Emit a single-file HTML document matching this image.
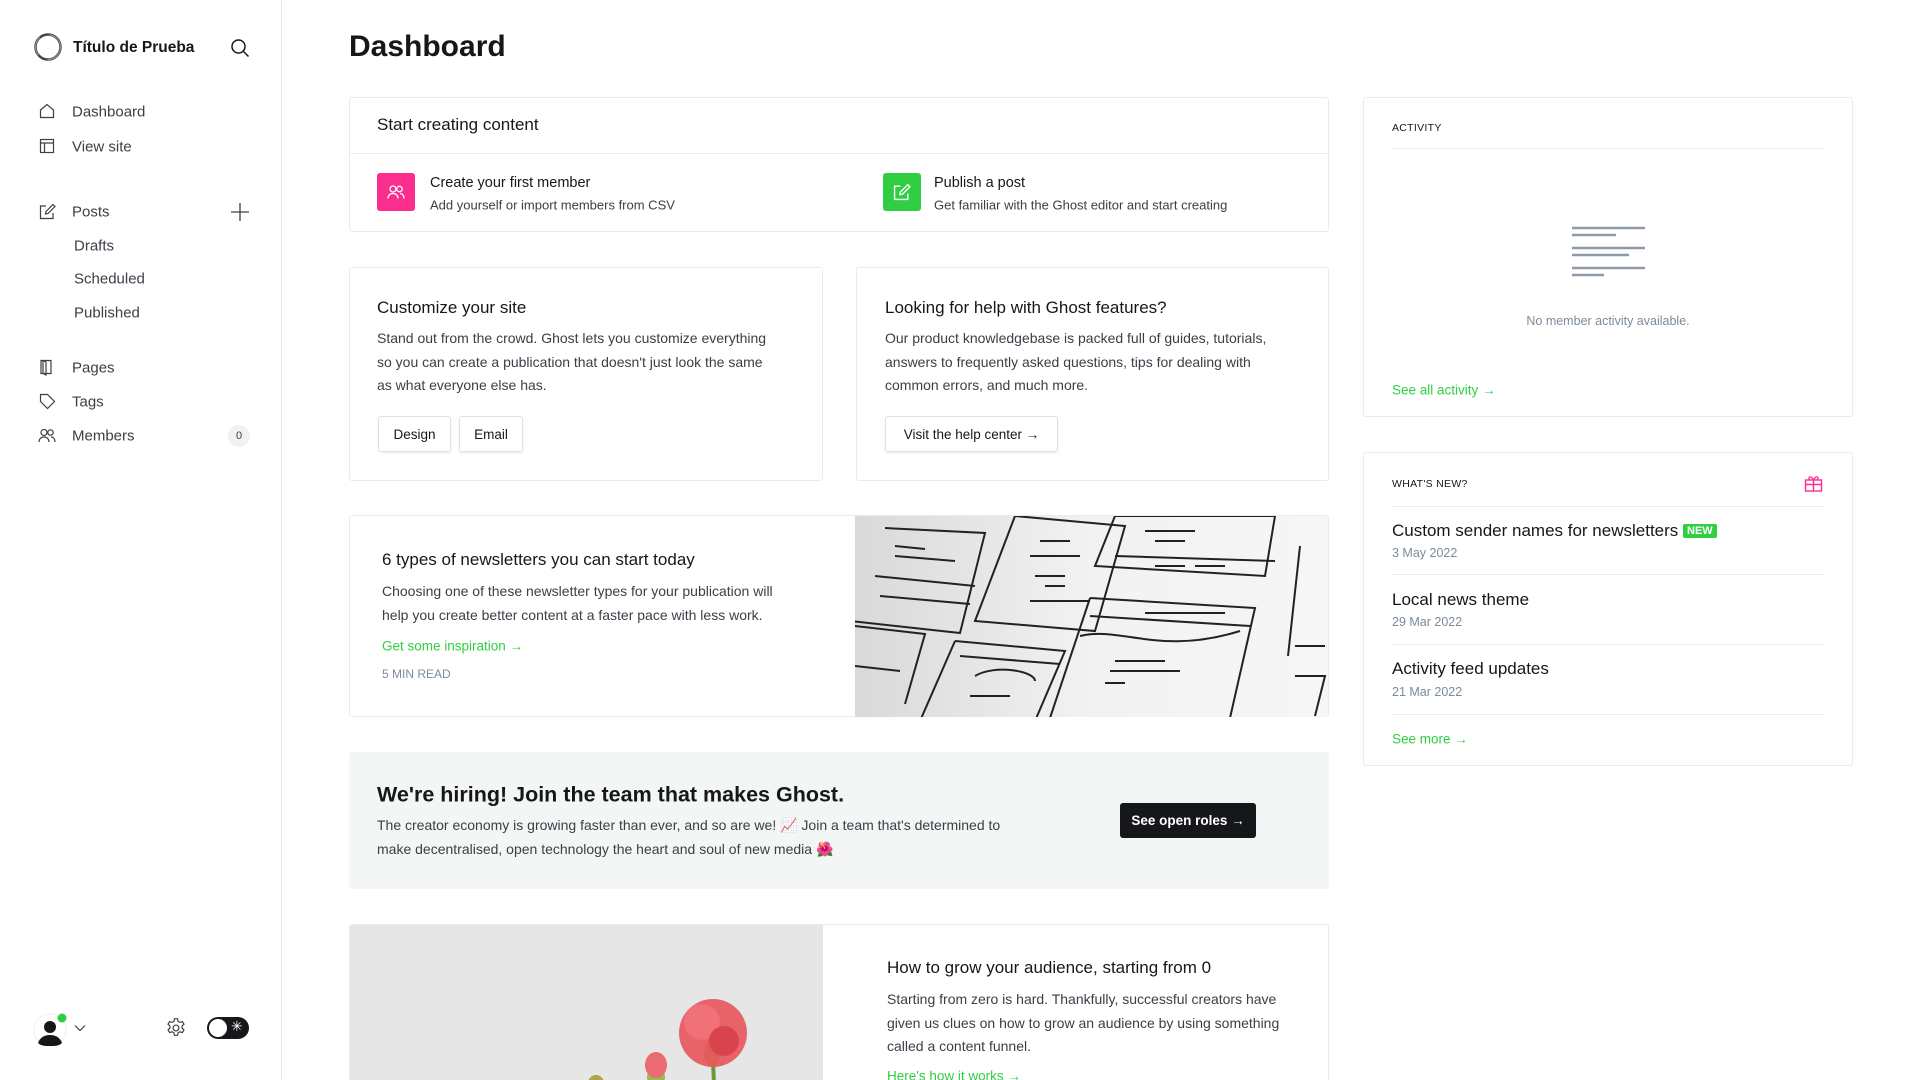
<!DOCTYPE html>
<html><head><meta charset="utf-8"><style>
*{margin:0;padding:0;box-sizing:border-box}
html{width:1920px;height:1080px;overflow:hidden}
body{width:1920px;height:1080px;overflow:hidden;background:#fff;font-family:"Liberation Sans",sans-serif;color:#15171a;position:relative}
.a{position:absolute;white-space:nowrap}
.vc{transform:translateY(-50%)}
.side{position:absolute;left:0;top:0;width:282px;height:1080px;border-right:1px solid #e6e8ea}
.nav{font-size:15px;color:#394047}
.card{position:absolute;border:1px solid #e9ebed;border-radius:3px;background:#fff}
.t{font-size:17px;color:#15171a}
.p{font-size:14px;color:#394047;line-height:23.5px}
.btn{position:absolute;border:1px solid #dfe1e3;border-radius:3px;box-shadow:0 1px 2px rgba(0,0,0,.08);font-size:13.5px;display:flex;align-items:center;justify-content:center;color:#15171a}
.g{color:#30cf43;font-size:13.5px}
.lab{font-size:10.5px;letter-spacing:.3px;color:#15171a}
.hr{position:absolute;height:1px;background:#ebeef0}
.wt{font-size:17px;color:#15171a}
.wd{font-size:12.5px;color:#7c8b9a}
</style></head><body>
<div class="side"></div>
<svg class="a" style="left:33px;top:32px" width="30" height="30" viewBox="0 0 30 30"><circle cx="15" cy="15" r="12.5" fill="none" stroke="#444" stroke-width="2.5"/><circle cx="15" cy="15" r="12.5" fill="none" stroke="#999" stroke-width="1" stroke-dasharray="20 10"/></svg>
<div class="a vc" style="left:73px;top:48px;font-size:15.5px;font-weight:bold">Título de Prueba</div>
<svg class="a" style="left:230px;top:38px" width="20" height="20" viewBox="0 0 20 20" fill="none" stroke="#15171a" stroke-width="1.5"><circle cx="8.5" cy="8.5" r="6.5"/><path d="M13.5 13.5l5 5"/></svg>
<svg class="a" style="left:39px;top:103px" width="16" height="16" viewBox="0 0 16 16" fill="none" stroke="#394047" stroke-width="1.2"><path d="M1.5 7L8 1.5 14.5 7v7.5h-13z"/></svg>
<div class="a nav vc" style="left:72px;top:112px">Dashboard</div>
<svg class="a" style="left:39px;top:138px" width="16" height="16" viewBox="0 0 16 16" fill="none" stroke="#394047" stroke-width="1.2"><rect x="1.5" y="1.5" width="13" height="13"/><path d="M1.5 5h13M5.5 5v9.5"/></svg>
<div class="a nav vc" style="left:72px;top:147px">View site</div>
<svg class="a" style="left:39px;top:203px" width="17" height="17" viewBox="0 0 17 17" fill="none" stroke="#394047" stroke-width="1.2"><path d="M7 3H1.5v12.5H14V10"/><path d="M14 1.5l2 2L9 10.5 6.5 11l.5-2.5z"/></svg>
<div class="a nav vc" style="left:72px;top:212px">Posts</div>
<svg class="a" style="left:230px;top:202px" width="20" height="20" viewBox="0 0 20 20" stroke="#394047" stroke-width="1.3"><path d="M10 1v18M1 10h18"/></svg>
<div class="a nav vc" style="left:74px;top:246px">Drafts</div>
<div class="a nav vc" style="left:74px;top:279px">Scheduled</div>
<div class="a nav vc" style="left:74px;top:313px">Published</div>
<svg class="a" style="left:39px;top:359px" width="16" height="17" viewBox="0 0 16 17" fill="none" stroke="#394047" stroke-width="1.2"><path d="M2 1.5h10v13H2zM4 1.5v13l3 1.5V3z"/></svg>
<div class="a nav vc" style="left:72px;top:368px">Pages</div>
<svg class="a" style="left:39px;top:393px" width="17" height="17" viewBox="0 0 17 17" fill="none" stroke="#394047" stroke-width="1.2"><path d="M1.5 1.5h7l7 7-7 7-7-7z"/></svg>
<div class="a nav vc" style="left:72px;top:402px">Tags</div>
<svg class="a" style="left:38px;top:428px" width="18" height="15" viewBox="0 0 18 15" fill="none" stroke="#394047" stroke-width="1.2"><circle cx="6" cy="4.5" r="3"/><path d="M1 14c0-3 2-5 5-5s5 2 5 5"/><circle cx="12.5" cy="4.5" r="2.7"/><path d="M13 9c2.5 0 4 2 4 5"/></svg>
<div class="a nav vc" style="left:72px;top:436px">Members</div>
<div class="a" style="left:228px;top:425px;width:22px;height:22px;border-radius:11px;background:#eff1f2;font-size:11px;color:#394047;display:flex;align-items:center;justify-content:center">0</div>
<svg class="a" style="left:33px;top:1013px" width="34" height="34" viewBox="0 0 34 34"><circle cx="17" cy="17" r="16" fill="#fff" stroke="#eee"/><circle cx="17" cy="14" r="6" fill="#15171a"/><path d="M5 30c2-6 7-8 12-8s10 2 12 8c-3 3-7 3-12 3s-9 0-12-3z" fill="#15171a"/><circle cx="29" cy="5" r="4.5" fill="#30cf43"/></svg>
<svg class="a" style="left:74px;top:1024px" width="12" height="8" viewBox="0 0 12 8" fill="none" stroke="#394047" stroke-width="1.2"><path d="M1 1.5l5 5 5-5"/></svg>
<svg class="a" style="left:165px;top:1017px" width="22" height="22" viewBox="0 0 24 24" fill="none" stroke="#394047" stroke-width="1.3"><circle cx="12" cy="12" r="3.2"/><path d="M10.3 2h3.4l.6 2.8 2 1.1 2.7-.9 1.7 2.9-2.1 1.9v2.4l2.1 1.9-1.7 2.9-2.7-.9-2 1.1-.6 2.8h-3.4l-.6-2.8-2-1.1-2.7.9-1.7-2.9 2.1-1.9V9.8L3.3 7.9 5 5l2.7.9 2-1.1z"/></svg>
<div class="a" style="left:207px;top:1017px;width:42px;height:22px;border-radius:11px;background:#15171a"></div>
<div class="a" style="left:209px;top:1019px;width:18px;height:18px;border-radius:9px;background:#fff"></div>
<div class="a" style="left:231px;top:1018px;font-size:14px;color:#fff">✳</div>

<div class="a vc" style="left:349px;top:47px;font-size:30px;font-weight:bold">Dashboard</div>

<div class="card" style="left:349px;top:97px;width:980px;height:135px"></div>
<div class="hr" style="left:350px;top:153px;width:978px"></div>
<div class="a t vc" style="left:377px;top:125px">Start creating content</div>
<div class="a" style="left:377px;top:173px;width:38px;height:38px;border-radius:3px;background:#fb2d8d"></div>
<svg class="a" style="left:387px;top:184px" width="18" height="16" viewBox="0 0 18 15" fill="none" stroke="#fff" stroke-width="1.3"><circle cx="6" cy="4.5" r="3"/><path d="M1 14c0-3 2-5 5-5s5 2 5 5"/><circle cx="12.5" cy="4.5" r="2.7"/><path d="M13 9c2.5 0 4 2 4 5"/></svg>
<div class="a vc" style="left:430px;top:183px;font-size:14.5px">Create your first member</div>
<div class="a vc" style="left:430px;top:205px;font-size:13px;color:#394047">Add yourself or import members from CSV</div>
<div class="a" style="left:883px;top:173px;width:38px;height:38px;border-radius:3px;background:#30cf43"></div>
<svg class="a" style="left:893px;top:183px" width="18" height="18" viewBox="0 0 17 17" fill="none" stroke="#fff" stroke-width="1.3"><path d="M7 3H1.5v12.5H14V10"/><path d="M14 1.5l2 2L9 10.5 6.5 11l.5-2.5z"/></svg>
<div class="a vc" style="left:934px;top:183px;font-size:14.5px">Publish a post</div>
<div class="a vc" style="left:934px;top:205px;font-size:13px;color:#394047">Get familiar with the Ghost editor and start creating</div>

<div class="card" style="left:349px;top:267px;width:474px;height:214px"></div>
<div class="a t vc" style="left:377px;top:308px">Customize your site</div>
<div class="a p" style="left:377px;top:327px">Stand out from the crowd. Ghost lets you customize everything<br>so you can create a publication that doesn't just look the same<br>as what everyone else has.</div>
<div class="btn" style="left:378px;top:416px;width:73px;height:36px">Design</div>
<div class="btn" style="left:459px;top:416px;width:64px;height:36px">Email</div>
<div class="card" style="left:856px;top:267px;width:473px;height:214px"></div>
<div class="a t vc" style="left:885px;top:308px">Looking for help with Ghost features?</div>
<div class="a p" style="left:885px;top:327px">Our product knowledgebase is packed full of guides, tutorials,<br>answers to frequently asked questions, tips for dealing with<br>common errors, and much more.</div>
<div class="btn" style="left:885px;top:416px;width:173px;height:36px">Visit the help center →</div>

<div class="card" style="left:349px;top:515px;width:980px;height:202px;overflow:hidden"></div>
<div class="a t vc" style="left:382px;top:560px">6 types of newsletters you can start today</div>
<div class="a p" style="left:382px;top:580px">Choosing one of these newsletter types for your publication will<br>help you create better content at a faster pace with less work.</div>
<div class="a g vc" style="left:382px;top:646px">Get some inspiration →</div>
<div class="a vc" style="left:382px;top:674px;font-size:12px;color:#7c8b9a">5 MIN READ</div>
<svg class="a" style="left:855px;top:516px" width="473" height="201" viewBox="0 0 473 201">
<defs><linearGradient id="sk" x1="0" x2="1" y1="0" y2="0"><stop offset="0" stop-color="#d9d9d9"/><stop offset=".5" stop-color="#f2f2f2"/><stop offset="1" stop-color="#f6f6f6"/></linearGradient></defs>
<rect width="473" height="201" fill="url(#sk)"/>
<g fill="none" stroke="#222" stroke-width="2">
<path d="M30 12l100 5-25 100-110-12"/><path d="M20 60l100 10M25 80l90 8M40 30l30 3M40 40l60 5"/>
<path d="M160 0l110 10-30 105-120-10z"/><path d="M175 40h50M180 60h30M175 85h60M185 25h30M190 70h20"/>
<path d="M260 0h160l-10 60-170-10z"/><path d="M260 40l160 5M300 50h30M340 50h30M290 15h50M300 25h30"/>
<path d="M235 82l165 10-25 110M235 82l-40 120"/><path d="M235 100l160 10M225 120c40-10 80 20 160-5"/><path d="M260 145h50M255 155h70M250 167h20M290 97h80"/>
<path d="M100 125l110 10-30 70M100 125l-35 80"/><path d="M105 140l100 8M120 160c20-12 60-5 60 5M115 180h40"/>
<path d="M445 30l-12 110M440 130h30M440 160h30l-10 40"/>
<path d="M0 110l70 8-20 70M0 150l45 5"/>
</g></svg>

<div class="a" style="left:349px;top:752px;width:980px;height:137px;background:#f4f5f5;border-radius:3px"></div>
<div class="a vc" style="left:377px;top:795px;font-size:21.5px;font-weight:bold">We're hiring! Join the team that makes Ghost.</div>
<div class="a p" style="left:377px;top:814px">The creator economy is growing faster than ever, and so are we! 📈 Join a team that's determined to<br>make decentralised, open technology the heart and soul of new media 🌺</div>
<div class="a" style="left:1120px;top:803px;width:136px;height:35px;background:#15171a;border-radius:3px;color:#fff;font-size:13.5px;font-weight:bold;display:flex;align-items:center;justify-content:center">See open roles →</div>

<div class="card" style="left:349px;top:924px;width:980px;height:156px;border-bottom:none;border-radius:3px 3px 0 0"></div>
<svg class="a" style="left:350px;top:925px" width="473" height="155" viewBox="0 0 473 155">
<rect width="473" height="155" fill="#e6e6e6"/>
<path d="M362 110l2 50" stroke="#6a9a3a" stroke-width="4"/><path d="M306 138l2 22" stroke="#6a9a3a" stroke-width="4"/>
<ellipse cx="362" cy="128" rx="8" ry="14" fill="#9bbb4c"/>
<circle cx="363" cy="108" r="34" fill="#e8535b" opacity=".9"/><circle cx="352" cy="97" r="18" fill="#f07177"/><circle cx="374" cy="116" r="15" fill="#d9444c"/>
<ellipse cx="306" cy="152" rx="9" ry="10" fill="#9bbb4c"/><ellipse cx="306" cy="140" rx="11" ry="13" fill="#ea6b72"/>
<ellipse cx="246" cy="158" rx="8" ry="8" fill="#b5a04c"/>
</svg>
<div class="a t vc" style="left:887px;top:968px">How to grow your audience, starting from 0</div>
<div class="a p" style="left:887px;top:988px">Starting from zero is hard. Thankfully, successful creators have<br>given us clues on how to grow an audience by using something<br>called a content funnel.</div>
<div class="a g vc" style="left:887px;top:1076px">Here's how it works →</div>

<div class="card" style="left:1363px;top:97px;width:490px;height:320px"></div>
<div class="a lab vc" style="left:1392px;top:128px">ACTIVITY</div>
<div class="hr" style="left:1392px;top:148px;width:432px"></div>
<svg class="a" style="left:1572px;top:226px" width="74" height="66" viewBox="0 0 74 66" stroke="#8e9aa5" stroke-width="2.5"><path d="M0 2h73M0 9h44M0 22h73M0 29h57M0 42h73M0 49h32"/></svg>
<div class="a vc" style="left:1608px;top:321px;transform:translate(-50%,-50%);font-size:12.5px;color:#7c8b9a">No member activity available.</div>
<div class="a g vc" style="left:1392px;top:390px">See all activity →</div>

<div class="card" style="left:1363px;top:452px;width:490px;height:314px"></div>
<div class="a lab vc" style="left:1392px;top:484px">WHAT'S NEW?</div>
<svg class="a" style="left:1804px;top:474px" width="19" height="19" viewBox="0 0 19 19" fill="none" stroke="#fb2d8d" stroke-width="1.4"><rect x="1.5" y="6" width="16" height="11"/><path d="M1.5 10.5h16M9.5 6v11M9.5 6C7 1 3 3 6 6M9.5 6c2.5-5 6.5-3 3.5 0"/></svg>
<div class="hr" style="left:1392px;top:506px;width:432px"></div>
<div class="a wt vc" style="left:1392px;top:531px">Custom sender names for newsletters <span style="background:#30cf43;color:#fff;font-size:11px;font-weight:bold;padding:1px 4px;border-radius:2px;vertical-align:2px">NEW</span></div>
<div class="a wd vc" style="left:1392px;top:553px">3 May 2022</div>
<div class="hr" style="left:1392px;top:574px;width:432px"></div>
<div class="a wt vc" style="left:1392px;top:600px">Local news theme</div>
<div class="a wd vc" style="left:1392px;top:622px">29 Mar 2022</div>
<div class="hr" style="left:1392px;top:644px;width:432px"></div>
<div class="a wt vc" style="left:1392px;top:669px">Activity feed updates</div>
<div class="a wd vc" style="left:1392px;top:692px">21 Mar 2022</div>
<div class="hr" style="left:1392px;top:714px;width:432px"></div>
<div class="a g vc" style="left:1392px;top:739px">See more →</div>
</body></html>
